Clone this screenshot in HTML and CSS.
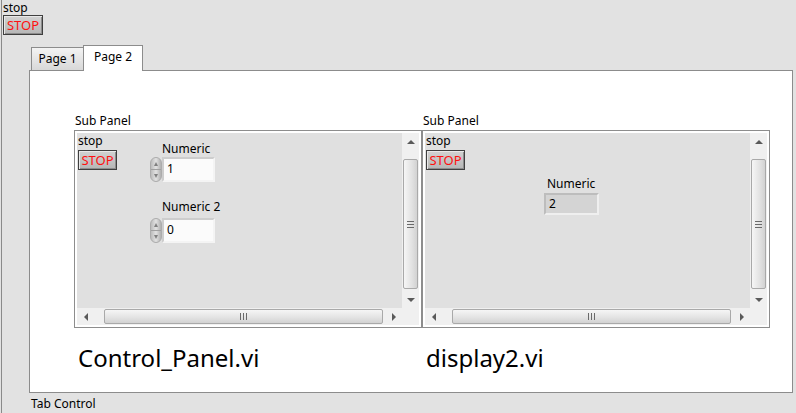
FILE: index.html
```html
<!DOCTYPE html>
<html lang="en">
<head>
    <meta charset="UTF-8">
    <meta name="viewport" content="width=device-width, initial-scale=1.0">
    <title>Front Panel</title>
    <link rel="stylesheet" href="styles.css">
</head>
<body>
    <div class="front">
        <div class="bool top">
            <div class="lbl">stop</div>
            <button class="stop-btn">STOP</button>
        </div>

        <div class="tab-control">
            <div class="tabs">
                <div class="tab">Page 1</div>
                <div class="tab active">Page 2</div>
            </div>
            <div class="tab-page">
                <div class="subpanels">
                    <div class="sp-col">
                        <div class="lbl sp-label">Sub Panel</div>
                        <div class="subpanel">
                            <div class="canvas">
                                <div class="bool">
                                    <div class="lbl">stop</div>
                                    <button class="stop-btn small">STOP</button>
                                </div>
                                <div class="num-col">
                                    <div class="num-ctl first">
                                        <div class="lbl">Numeric</div>
                                        <div class="num-row">
                                            <div class="spin"><span class="up"></span><span class="down"></span></div>
                                            <div class="num-box">1</div>
                                        </div>
                                    </div>
                                    <div class="num-ctl second">
                                        <div class="lbl">Numeric 2</div>
                                        <div class="num-row">
                                            <div class="spin"><span class="up"></span><span class="down"></span></div>
                                            <div class="num-box">0</div>
                                        </div>
                                    </div>
                                </div>
                            </div>
                            <div class="vscroll">
                                <div class="arrow"><span class="tri-up"></span></div>
                                <div class="vthumb"><span class="grip-h"></span></div>
                                <div class="arrow bottom"><span class="tri-down"></span></div>
                            </div>
                            <div class="hscroll">
                                <div class="arrow"><span class="tri-left"></span></div>
                                <div class="hthumb"><span class="grip-v"></span></div>
                                <div class="arrow right"><span class="tri-right"></span></div>
                            </div>
                            <div class="corner"></div>
                        </div>
                        <div class="vi-name">Control_Panel.vi</div>
                    </div>

                    <div class="sp-col">
                        <div class="lbl sp-label">Sub Panel</div>
                        <div class="subpanel">
                            <div class="canvas">
                                <div class="bool">
                                    <div class="lbl">stop</div>
                                    <button class="stop-btn small">STOP</button>
                                </div>
                                <div class="ind-col">
                                    <div class="lbl">Numeric</div>
                                    <div class="num-ind">2</div>
                                </div>
                            </div>
                            <div class="vscroll">
                                <div class="arrow"><span class="tri-up"></span></div>
                                <div class="vthumb"><span class="grip-h"></span></div>
                                <div class="arrow bottom"><span class="tri-down"></span></div>
                            </div>
                            <div class="hscroll">
                                <div class="arrow"><span class="tri-left"></span></div>
                                <div class="hthumb"><span class="grip-v"></span></div>
                                <div class="arrow right"><span class="tri-right"></span></div>
                            </div>
                            <div class="corner"></div>
                        </div>
                        <div class="vi-name">display2.vi</div>
                    </div>
                </div>
            </div>
            <div class="lbl tab-label">Tab Control</div>
        </div>
    </div>
</body>
</html>
```

FILE: styles.css
```css
* {
    box-sizing: border-box;
}
body {
    margin: 0;
    height: 413px;
    overflow: hidden;
    background: #e2e2e2;
    font-family: "Noto Sans", "DejaVu Sans", sans-serif;
    font-size: 12px;
    color: #000;
}
.front {
    height: 413px;
    margin-left: 1px;
    padding-left: 1px;
    border-left: 1px solid #8a8a8a;
}
.lbl {
    line-height: 14px;
    white-space: nowrap;
}
.bool.top {
    padding-top: 1px;
}
.bool.top .lbl {
    line-height: 13px;
}

/* boolean stop button */
.stop-btn {
    display: block;
    width: 40px;
    height: 20px;
    margin-top: 1px;
    padding: 0;
    border: 1px solid #3f3f3f;
    background: linear-gradient(#d2d2d2, #b6b6b6);
    box-shadow: inset 1px 1px 0 #e8e8e8, inset -1px -1px 0 #8c8c8c;
    color: #ff1010;
    font-family: "Noto Sans", sans-serif;
    font-size: 13px;
    line-height: 17px;
    text-align: center;
}
.stop-btn.small {
    width: 39px;
    margin-top: 2px;
}

/* tab control */
.tab-control {
    margin-left: 26px;
    margin-top: 10px;
}
.tabs {
    display: flex;
    align-items: flex-end;
    height: 25px;
    padding-left: 2px;
}
.tab {
    width: 53px;
    height: 23px;
    border: 1px solid #8c8c8c;
    border-bottom: none;
    background: linear-gradient(#f3f3f3, #d8d8d8);
    text-align: center;
    line-height: 22px;
}
.tab.active {
    position: relative;
    z-index: 1;
    width: 60px;
    height: 26px;
    margin-left: -1px;
    margin-bottom: -1px;
    background: #fff;
    line-height: 22px;
}
.tab-page {
    width: 764px;
    height: 323px;
    border: 1px solid #8c8c8c;
    background: #fff;
    padding: 43px 0 0 44px;
}
.tab-label {
    margin-top: 4px;
    padding-left: 2px;
}

/* sub panels */
.subpanels {
    display: flex;
}
.sp-col {
    width: 348px;
}
.sp-label {
    padding-left: 1px;
    margin-bottom: 2px;
}
.subpanel {
    display: grid;
    grid-template-columns: 1fr 17px;
    grid-template-rows: 1fr 17px;
    height: 198px;
    border: 1px solid #8d8d8d;
    padding: 2px;
    background: #fff;
}
.canvas {
    display: flex;
    align-items: flex-start;
    background: #e0e0e0;
    padding: 1px 0 0 1px;
}
.vi-name {
    margin-top: 16px;
    padding-left: 4px;
    font-size: 24px;
    line-height: 28px;
}

/* numeric controls */
.num-col {
    margin-left: 33px;
}
.num-ctl .lbl {
    padding-left: 12px;
}
.num-ctl.first {
    margin-top: 8px;
}
.num-ctl.first .num-row {
    margin-top: 1px;
}
.num-ctl.second {
    margin-top: 18px;
}
.num-ctl.second .num-row {
    margin-top: 4px;
}
.num-row {
    display: flex;
    height: 25px;
}
.spin {
    display: flex;
    flex-direction: column;
    width: 12px;
    border-radius: 6px;
    background: linear-gradient(to right, #bcbcbc, #e2e2e2 50%, #b0b0b0);
    border: 1px solid #acacac;
}
.spin span {
    flex: 1;
    display: flex;
    align-items: center;
    justify-content: center;
}
.spin .up {
    border-bottom: 1px solid #a0a0a0;
}
.spin .up::before {
    content: "";
    border-left: 2px solid transparent;
    border-right: 2px solid transparent;
    border-bottom: 4px solid #808080;
}
.spin .down::before {
    content: "";
    border-left: 2px solid transparent;
    border-right: 2px solid transparent;
    border-top: 4px solid #808080;
}
.num-box {
    width: 53px;
    border: 2px solid;
    border-color: #cdcdcd #f4f4f4 #f4f4f4 #cdcdcd;
    background: #fbfbfb;
    padding-left: 3px;
    line-height: 20px;
}
.ind-col {
    margin-left: 79px;
    margin-top: 43px;
}
.ind-col .lbl {
    padding-left: 3px;
}
.num-ind {
    width: 55px;
    height: 22px;
    margin-top: 2px;
    border: 2px solid;
    border-color: #bdbdbd #efefef #efefef #bdbdbd;
    background: #d4d4d4;
    padding-left: 3px;
    line-height: 18px;
}

/* scrollbars */
.vscroll,
.hscroll,
.corner {
    background: #f0f0f0;
}
.vscroll {
    display: flex;
    flex-direction: column;
}
.hscroll {
    display: flex;
}
.arrow {
    display: flex;
    align-items: center;
    justify-content: center;
    width: 17px;
    height: 17px;
    flex: none;
}
.arrow.bottom {
    margin-top: auto;
}
.arrow.right {
    margin-left: auto;
}
.tri-up {
    border-left: 4px solid transparent;
    border-right: 4px solid transparent;
    border-bottom: 4px solid #5a5a5a;
}
.tri-down {
    border-left: 4px solid transparent;
    border-right: 4px solid transparent;
    border-top: 4px solid #5a5a5a;
}
.tri-left {
    border-top: 4px solid transparent;
    border-bottom: 4px solid transparent;
    border-right: 4px solid #5a5a5a;
}
.tri-right {
    border-top: 4px solid transparent;
    border-bottom: 4px solid transparent;
    border-left: 4px solid #5a5a5a;
}
.vthumb {
    display: flex;
    align-items: center;
    justify-content: center;
    height: 130px;
    margin: 9px 1px 0;
    border: 1px solid #a9a9a9;
    border-radius: 2px;
    background: linear-gradient(to right, #f6f6f6, #e2e2e2 60%, #d2d2d2);
}
.hthumb {
    display: flex;
    align-items: center;
    justify-content: center;
    width: 279px;
    margin: 1px 0 1px 10px;
    border: 1px solid #a9a9a9;
    border-radius: 2px;
    background: linear-gradient(#f6f6f6, #e2e2e2 60%, #d2d2d2);
}
.grip-h {
    width: 7px;
    height: 7px;
    background: repeating-linear-gradient(#6a6a6a 0 1px, transparent 1px 3px);
}
.grip-v {
    width: 7px;
    height: 7px;
    background: repeating-linear-gradient(to right, #6a6a6a 0 1px, transparent 1px 3px);
}
```
